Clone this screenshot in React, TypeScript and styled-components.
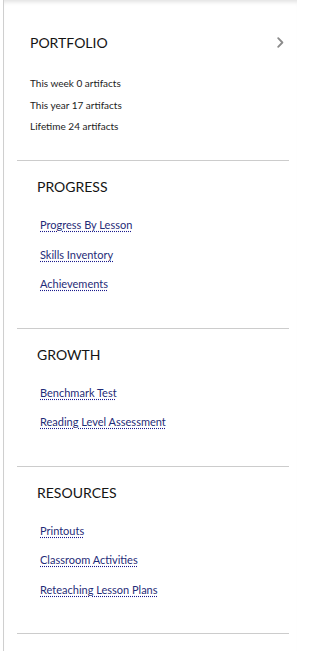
import React from 'react'
import styled, { createGlobalStyle } from 'styled-components'

const GlobalStyle = createGlobalStyle`
  html, body {
    margin: 0;
    padding: 0;
    background: #ffffff;
  }
  body {
    font-family: Lato, "Liberation Sans", sans-serif;
    color: #222222;
  }
`

type LinkGroup = {
  title: string
  links: string[]
}

const groups: LinkGroup[] = [
  { title: 'PROGRESS', links: ['Progress By Lesson', 'Skills Inventory', 'Achievements'] },
  { title: 'GROWTH', links: ['Benchmark Test', 'Reading Level Assessment'] },
  { title: 'RESOURCES', links: ['Printouts', 'Classroom Activities', 'Reteaching Lesson Plans'] },
]

const stats = [
  { label: 'This week', count: 0 },
  { label: 'This year', count: 17 },
  { label: 'Lifetime', count: 24 },
]

const Chevron = () => (
  <svg width='7' height='11' viewBox='0 0 7 11' fill='none'>
    <path d='M1.2 1.2 L5.4 5.5 L1.2 9.8' stroke='#8a8a8a' strokeWidth='1.8' strokeLinecap='round' strokeLinejoin='round' />
  </svg>
)

export default function App() {
  return (
    <>
      <GlobalStyle />
      <Aside_Panel>
        <Section_Block>
          <Div_PortfolioHeader>
            <H2_Heading>PORTFOLIO</H2_Heading>
            <A_ChevronLink href='#'>
              <Chevron />
            </A_ChevronLink>
          </Div_PortfolioHeader>
          <Ul_Stats>
            {stats.map(s => (
              <li key={s.label}>
                {s.label} {s.count} artifacts
              </li>
            ))}
          </Ul_Stats>
        </Section_Block>
        {groups.map(g => (
          <Section_Block key={g.title} $padded>
            <H2_Heading $indent>{g.title}</H2_Heading>
            <Ul_Links>
              {g.links.map(l => (
                <li key={l}>
                  <A_Link href='#'>{l}</A_Link>
                </li>
              ))}
            </Ul_Links>
          </Section_Block>
        ))}
      </Aside_Panel>
    </>
  )
}

const Aside_Panel = styled.aside`
  width: 294px;
  min-height: 651px;
  margin-left: 3px;
  border-left: 1px solid #cfcfcf;
  box-shadow: inset 0 5px 4px -3px rgba(0, 0, 0, 0.12);
  padding-right: 8px;
  box-sizing: border-box;
`

const Section_Block = styled.section<{ $padded?: boolean }>`
  margin-left: 13px;
  border-bottom: 1px solid #cccccc;
  padding: ${p => (p.$padded ? '17px 0 36.5px' : '34px 5px 28px 13px')};
`

const Div_PortfolioHeader = styled.div`
  display: flex;
  justify-content: space-between;
  align-items: center;
`

const H2_Heading = styled.h2<{ $indent?: boolean }>`
  margin: 0;
  padding-left: ${p => (p.$indent ? '20px' : '0')};
  font-size: 14px;
  line-height: 17px;
  font-weight: 400;
  color: #141414;
`

const A_ChevronLink = styled.a`
  display: flex;
  align-items: center;
`

const Ul_Stats = styled.ul`
  list-style: none;
  margin: 26px 0 0;
  padding: 0;
  display: flex;
  flex-direction: column;
  gap: 9.5px;
  font-size: 10px;
  line-height: 12px;
  color: #1c1c1c;
`

const Ul_Links = styled.ul`
  list-style: none;
  margin: 23px 0 0;
  padding: 0 0 0 23px;
  display: flex;
  flex-direction: column;
  gap: 15.5px;
  font-size: 11px;
  line-height: 14px;
`

const A_Link = styled.a`
  color: #1f2c78;
  text-decoration: underline dotted #1a1a8c;
  text-underline-offset: 2px;
`
